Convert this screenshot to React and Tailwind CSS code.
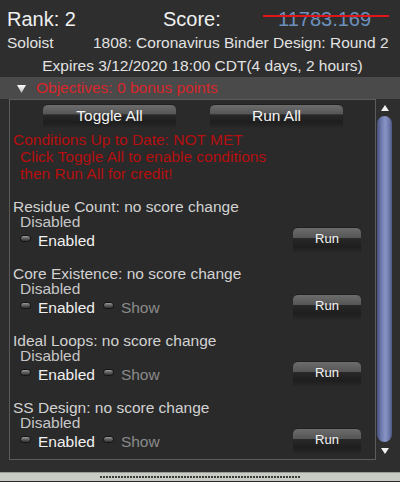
import React from 'react';

const Radio = ({ className = '' }) => (
  <span
    className={
      'inline-block w-[11px] h-[7px] -mt-[4px] rounded-full border border-[#141414] bg-[linear-gradient(to_bottom,#a0a0a0_0%,#666_40%,#333_100%)] ' +
      className
    }
  />
);

const GlossButton = ({ label, className = '', text = 'text-[15.5px]' }) => (
  <div
    className={
      'flex items-center justify-center rounded-t-[5px] border-t border-[#202020] bg-[linear-gradient(to_bottom,#6c6c6c_0%,#555_40%,#282828_42%,#1e1e1e_75%,#292929_100%)] text-[#f4f4f4] ' +
      text +
      ' ' +
      className
    }
  >
    {label}
  </div>
);

const Condition = ({ title, show }) => (
  <div className="flex h-[67px] shrink-0">
    <div className="flex-1">
      <div className="h-[15px] leading-[15px] pl-[3px] text-[#d2d2d2] whitespace-nowrap">{title}</div>
      <div className="h-[15px] leading-[15px] pl-[10px] text-[#c6c6c6]">Disabled</div>
      <div className="mt-[2px] h-[19px] leading-[19px] flex items-center pl-[10px]">
        <Radio />
        <span className="ml-[7px] text-[#f0f0f0]">Enabled</span>
        {show && (
          <>
            <Radio className="ml-[8px]" />
            <span className="ml-[7px] text-[#8a8a8a]">Show</span>
          </>
        )}
      </div>
    </div>
    <GlossButton label="Run" text="text-[13px]" className="mt-[28px] mr-[14px] w-[68px] h-[26px] pb-[4px]" />
  </div>
);

export default function App() {
  return (
    <div className="w-[400px] h-[482px] overflow-hidden bg-[#2e2e2e] font-['Liberation_Sans',Arial,sans-serif] text-[15.5px] text-[#e6e6e6]">
      {/* header */}
      <div className="pt-[7px] h-[31px] flex pl-[7px] text-[20px] leading-[24px] text-[#f0f0f0]">
        <span className="w-[156px]">Rank: 2</span>
        <span className="w-[115px]">Score:</span>
        <span className="relative text-[#6d90bd]">
          11783.169
          <span className="absolute left-[-15px] right-[-18px] top-[8px] h-[2px] bg-[#e0161a]" />
        </span>
      </div>
      <div className="mt-[3px] h-[17px] leading-[17px] flex pl-[7px] text-[#e2e2e2]">
        <span className="w-[86px]">Soloist</span>
        <span>1808: Coronavirus Binder Design: Round 2</span>
      </div>
      <div className="mt-[6px] h-[17px] leading-[17px] text-center pl-[5px] text-[#e2e2e2]">
        Expires 3/12/2020 18:00 CDT(4 days, 2 hours)
      </div>

      {/* objectives bar */}
      <div className="mt-[3px] h-[22px] leading-[22px] bg-[#4a4a4a] flex items-center pl-[17px]">
        <svg width="9" height="8" viewBox="0 0 9 8" className="mt-[1px]">
          <defs>
            <linearGradient id="tri" x1="0" y1="0" x2="0" y2="1">
              <stop offset="0" stopColor="#ffffff" />
              <stop offset="1" stopColor="#b8b8b8" />
            </linearGradient>
          </defs>
          <polygon points="0,0 9,0 4.5,8" fill="url(#tri)" />
        </svg>
        <span className="ml-[10px] text-[#d8262a]">Objectives: 0 bonus points</span>
      </div>

      {/* body */}
      <div className="flex pl-[9px]">
        <div className="w-[367px] h-[361px] overflow-hidden border border-[#5c5c5c] bg-[#2a2a2a] flex flex-col">
          <div className="pt-[4px] flex pl-[33px] gap-[34px]">
            <GlossButton label="Toggle All" className="w-[133px] h-[24px] pb-[2px]" />
            <GlossButton label="Run All" className="w-[133px] h-[24px] pb-[2px]" />
          </div>
          <div className="mt-[3px] leading-[17px] text-[#b50f0f]">
            <div className="pl-[3px]">Conditions Up to Date: NOT MET</div>
            <div className="pl-[10px]">Click Toggle All to enable conditions</div>
            <div className="pl-[10px]">then Run All for credit!</div>
          </div>
          <div className="mt-[17px] flex flex-col">
            <Condition title="Residue Count: no score change" />
            <Condition title="Core Existence: no score change" show />
            <Condition title="Ideal Loops: no score change" show />
            <Condition title="SS Design: no score change" show />
          </div>
        </div>

        {/* scrollbar */}
        <div className="ml-[1px] w-[15px] h-[361px] flex flex-col items-center">
          <svg width="8" height="6" viewBox="0 0 8 6" className="mt-[6px]">
            <polygon points="4,0 8,6 0,6" fill="#f0f0f0" />
          </svg>
          <div className="mt-[5px] w-[15px] h-[326px] rounded-full bg-[linear-gradient(to_right,#474f7c_0%,#6f7cae_30%,#8894c4_55%,#6e7aab_80%,#4c5582_100%)]" />
          <svg width="8" height="6" viewBox="0 0 8 6" className="mt-[6px]">
            <polygon points="0,0 8,0 4,6" fill="#f0f0f0" />
          </svg>
        </div>
      </div>

      {/* bottom strip */}
      <div className="mt-[12px] h-[9px] border-t border-[#9a9c96] bg-[#c8cbc4] flex items-center justify-center">
        <div className="w-[200px] h-[2px] bg-[repeating-linear-gradient(to_right,#3c3c3c_0_2px,transparent_2px_3px)]" />
      </div>
      <div className="h-[1px] bg-[#2a2a2a]" />
    </div>
  );
}
